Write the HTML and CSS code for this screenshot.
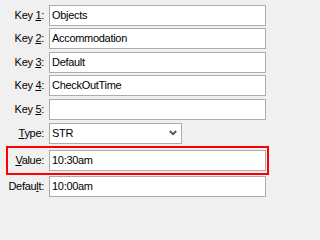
FILE: index.html
```html
<!DOCTYPE html>
<html>
<head>
<meta charset="utf-8">
<link rel="stylesheet" href="styles.css">
</head>
<body>
<div class="form">
  <div class="row">
    <label class="lbl">Key <u>1</u>:</label>
    <div class="field">Objects</div>
  </div>
  <div class="row">
    <label class="lbl">Key <u>2</u>:</label>
    <div class="field">Accommodation</div>
  </div>
  <div class="row wide-gap">
    <label class="lbl">Key <u>3</u>:</label>
    <div class="field">Default</div>
  </div>
  <div class="row">
    <label class="lbl">Key <u>4</u>:</label>
    <div class="field">CheckOutTime</div>
  </div>
  <div class="row wide-gap">
    <label class="lbl">Key <u>5</u>:</label>
    <div class="field"></div>
  </div>
  <div class="row wide-gap">
    <label class="lbl"><u>T</u>ype:</label>
    <div class="field select">
      <span>STR</span>
      <svg class="chev" width="8" height="6" viewBox="0 0 8 6"><path d="M0.8 1 L4 4.2 L7.2 1" fill="none" stroke="#555" stroke-width="1.8"/></svg>
    </div>
  </div>
  <div class="row highlight">
    <label class="lbl"><u>V</u>alue:</label>
    <div class="field">10:30am</div>
  </div>
  <div class="row tight-gap">
    <label class="lbl">Defau<u>l</u>t:</label>
    <div class="field">10:00am</div>
  </div>
</div>
</body>
</html>
```
FILE: styles.css
```css
html, body {
  margin: 0;
  padding: 0;
  background: #f0f0f0;
}
body {
  font-family: "Liberation Sans", Arial, sans-serif;
  font-size: 11px;
  color: #000;
  letter-spacing: -0.3px;
}
.form {
  box-sizing: border-box;
  width: 271px;
  height: 202px;
  overflow: hidden;
  display: flex;
  flex-direction: column;
  gap: 2px;
  padding: 5px 5px 0 0;
}
.row {
  display: grid;
  grid-template-columns: 44px 1fr;
  column-gap: 5px;
  align-items: center;
  height: 21px;
  flex: none;
}
.row.wide-gap {
  margin-top: 1px;
}
.row.tight-gap {
  margin-top: -1px;
}
.lbl {
  text-align: right;
  white-space: nowrap;
  padding-bottom: 1px;
}
.lbl u {
  text-decoration-thickness: 1px;
  text-underline-offset: 1px;
}
.field {
  box-sizing: border-box;
  height: 21px;
  border: 1px solid #acacac;
  background: #fff;
  padding: 0 2px 1px 2px;
  display: flex;
  align-items: center;
  white-space: nowrap;
}
.select {
  width: 133px;
  justify-content: space-between;
  padding-right: 4px;
}
.chev {
  display: block;
}
.highlight {
  box-sizing: content-box;
  border: 2px solid #ff0000;
  padding: 2px 1px 2px 0;
  margin-left: 6px;
  margin-right: -3px;
  grid-template-columns: 36px 1fr;
}
```
